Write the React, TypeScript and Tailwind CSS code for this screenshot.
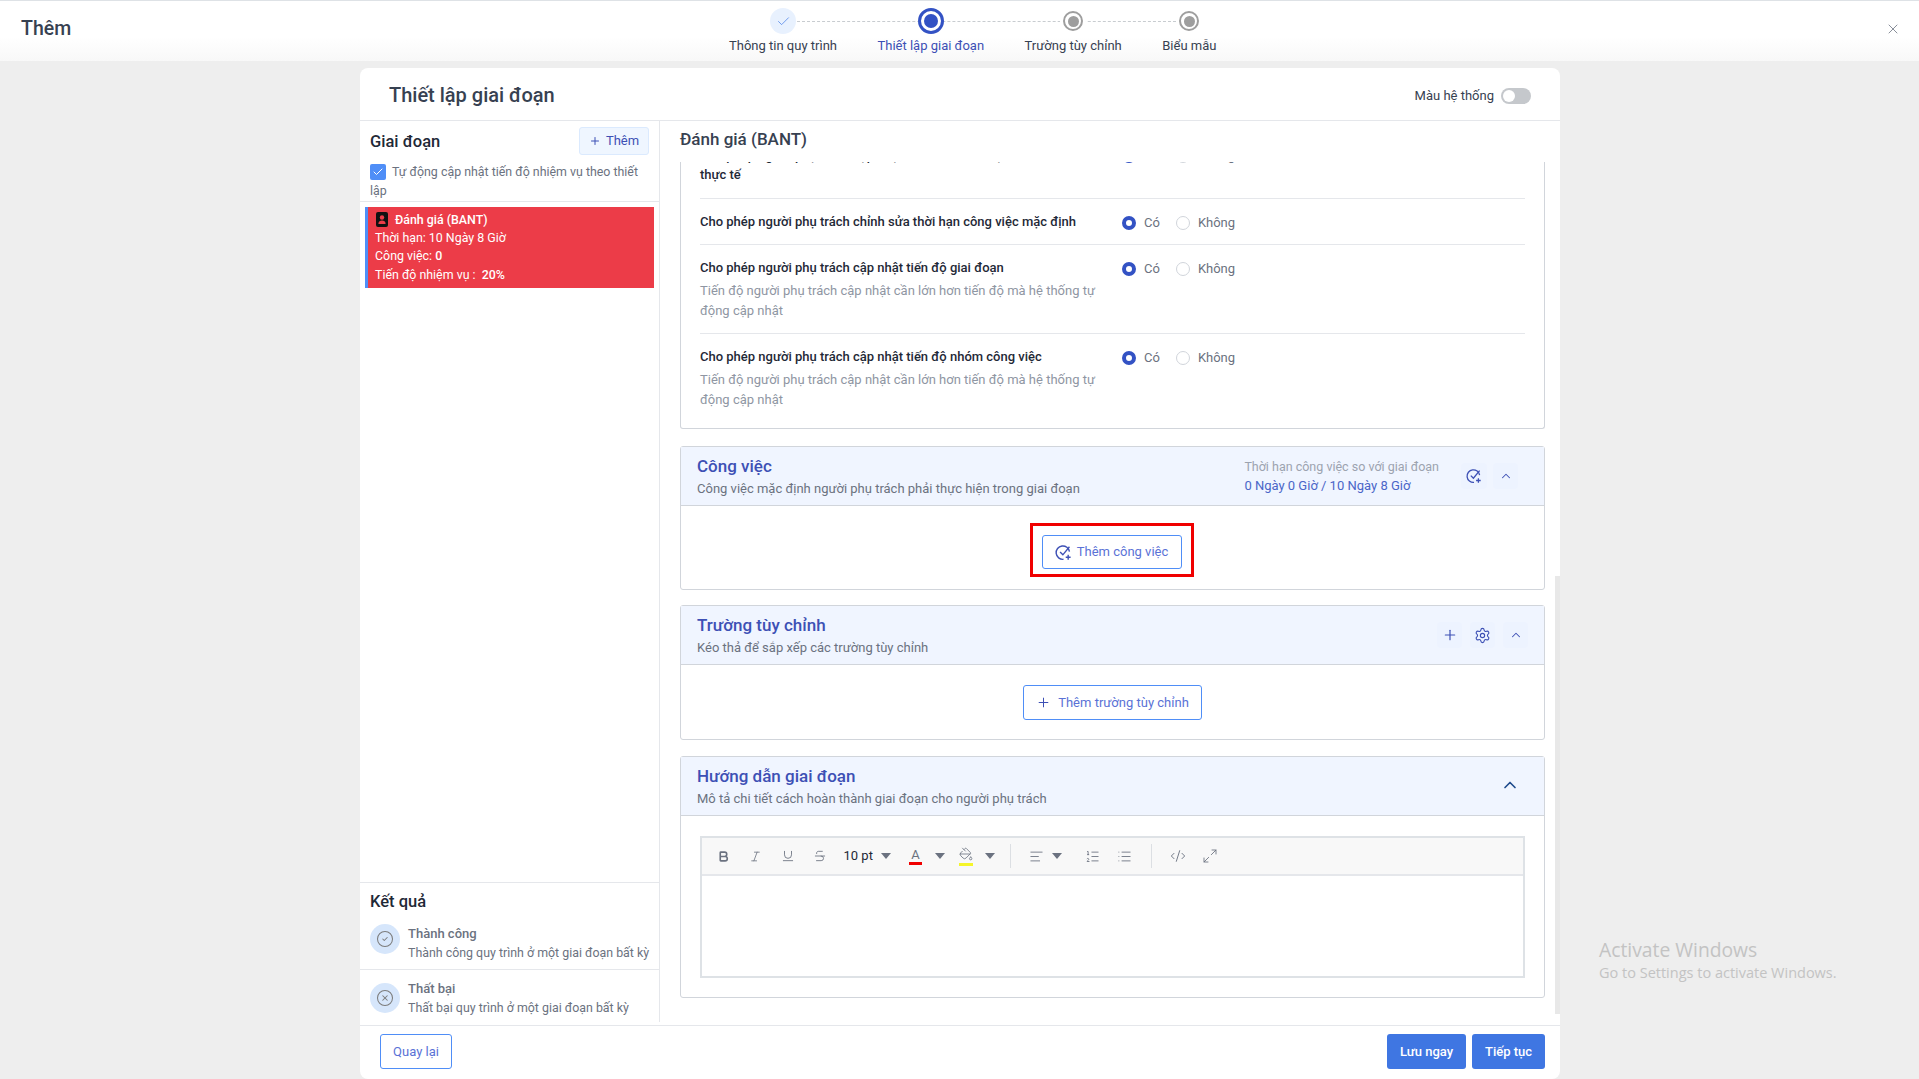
import type { ReactNode } from 'react';
import {
  AlignLeft,
  Bold,
  Check,
  ChevronUp,
  CircleCheck,
  CircleX,
  CodeXml,
  Italic,
  List,
  ListOrdered,
  Maximize2,
  PaintBucket,
  Plus,
  Settings,
  Strikethrough,
  Underline,
  X,
} from 'lucide-react';

function CheckPlusIcon({ size = 16 }: { size?: number }) {
  return (
    <svg width={size} height={size} viewBox="0 0 16 16" fill="none" stroke="currentColor" strokeWidth="1.3">
      <path d="M13.6 7.2A6.3 6.3 0 1 0 8 14.4" />
      <path d="M4.8 7.6 7.4 10.2 13.6 2.6" />
      <path d="M12.4 10.2v4.6M10.1 12.5h4.6" />
    </svg>
  );
}

function Caret() {
  return (
    <svg width="10" height="6" viewBox="0 0 10 6" className="fill-[#6b7280]">
      <path d="M0 0h10L5 6z" />
    </svg>
  );
}

function Radio({ checked, label }: { checked?: boolean; label: string }) {
  return (
    <div className="flex items-center">
      {checked ? (
        <span className="h-[14px] w-[14px] rounded-full border-[4px] border-[#3352c4] bg-white" />
      ) : (
        <span className="h-[14px] w-[14px] rounded-full border border-[#d1d5db] bg-white" />
      )}
      <span className="ml-2 text-[13px] text-[#6b7280]">{label}</span>
    </div>
  );
}

function RadioPair() {
  return (
    <div className="flex h-[19px] shrink-0 items-center gap-[16px]">
      <Radio checked label="Có" />
      <Radio label="Không" />
    </div>
  );
}

function SettingRow({ title, desc }: { title: string; desc?: string }) {
  return (
    <div className="flex border-b border-[#e5e7eb] pt-[14px] pb-[12px] last:border-b-0">
      <div className="w-[422px]">
        <p className="-mt-px mb-px text-[13px] leading-[19px] font-medium text-[#1f2937]">{title}</p>
        {desc && <p className="mt-[4px] w-[400px] text-[13px] leading-[20px] text-[#8f96a3]">{desc}</p>}
      </div>
      <RadioPair />
    </div>
  );
}

function Section({
  title,
  subtitle,
  right,
  children,
  className,
}: {
  title: string;
  subtitle: string;
  right?: ReactNode;
  children: ReactNode;
  className?: string;
}) {
  return (
    <section className={`rounded-[3px] border border-[#d1d5db] ${className ?? ''}`}>
      <div className="flex h-[59px] items-center justify-between border-b border-[#d1d5db] bg-[#f0f5ff] pl-4">
        <div>
          <h3 className="text-[17px] leading-[22px] font-medium text-[#3d50b5]">{title}</h3>
          <p className="mt-[3px] text-[13px] leading-[18px] text-[#6b7280]">{subtitle}</p>
        </div>
        {right}
      </div>
      {children}
    </section>
  );
}

function IconCell({ children, className }: { children: ReactNode; className?: string }) {
  return (
    <span className={`flex h-[26px] items-center justify-center rounded-[4px] bg-[#edf3ff] text-[#3d50b5] ${className ?? ''}`}>
      {children}
    </span>
  );
}

function Tool({ children, className }: { children: ReactNode; className?: string }) {
  return <span className={`flex h-6 w-8 items-center justify-center text-[#6b7280] ${className ?? ''}`}>{children}</span>;
}

function CaretCell({ className }: { className?: string }) {
  return (
    <span className={`flex h-6 w-3 items-center justify-center ${className ?? ''}`}>
      <Caret />
    </span>
  );
}

function Step({ label, state }: { label: string; state: 'done' | 'active' | 'todo' }) {
  return (
    <div className="flex flex-col items-center">
      <div className="relative z-10 flex h-[26px] w-[26px] items-center justify-center rounded-full bg-white">
        {state === 'done' && (
          <span className="flex h-[26px] w-[26px] items-center justify-center rounded-full bg-[#e8f1fe]">
            <Check size={15} strokeWidth={1.2} className="text-[#4a80e8]" />
          </span>
        )}
        {state === 'active' && (
          <span className="flex h-[26px] w-[26px] items-center justify-center rounded-full border-[3px] border-[#3352c4]">
            <span className="h-[14px] w-[14px] rounded-full bg-[#3352c4]" />
          </span>
        )}
        {state === 'todo' && (
          <span className="flex h-[20px] w-[20px] items-center justify-center rounded-full border-[2px] border-[#9e9e9e]">
            <span className="h-[11px] w-[11px] rounded-full bg-[#9e9e9e]" />
          </span>
        )}
      </div>
      <span className={`mt-[3px] text-[13px] leading-[18px] ${state === 'active' ? 'text-[#3d50b5]' : 'text-[#374151]'}`}>
        {label}
      </span>
    </div>
  );
}

export default function App() {
  return (
    <div className="relative flex h-[1079px] w-[1919px] flex-col overflow-hidden bg-[#eeeeee] font-['Roboto',sans-serif]">
      {/* Top bar */}
      <header className="flex h-[61px] shrink-0 items-start border-t border-[#dee2e6] bg-linear-to-b from-white from-60% to-[#f8f8f8] pl-5">
        <h1 className="mt-[16px] ml-px w-[708px] text-[19.5px] leading-[24px] font-medium text-[#374151]">Thêm</h1>
        <div className="relative mt-[7px] flex gap-[40.5px]">
          <div className="absolute top-[13px] right-[40px] left-[68px] border-t border-dashed border-[#c8ccd0]" />
          <Step label="Thông tin quy trình" state="done" />
          <Step label="Thiết lập giai đoạn" state="active" />
          <Step label="Trường tùy chỉnh" state="todo" />
          <Step label="Biểu mẫu" state="todo" />
        </div>
        <button type="button" aria-label="Đóng" className="mt-[20px] mr-[18px] ml-auto text-[#6b7280]">
          <X size={16} strokeWidth={1.2} />
        </button>
      </header>

      {/* Card */}
      <div className="mt-[7px] ml-[360px] flex min-h-0 w-[1200px] flex-1 flex-col overflow-hidden rounded-[8px] bg-white">
        <div className="flex h-[53px] shrink-0 items-center justify-between border-b border-[#e5e7eb] px-[29px]">
          <h2 className="pt-[2px] text-xl font-medium text-[#374151]">Thiết lập giai đoạn</h2>
          <div className="flex items-center gap-[7px] pt-[4px]">
            <span className="text-[13px] text-[#374151]">Màu hệ thống</span>
            <span className="flex h-4 w-[30px] items-center rounded-full bg-[#c5c8cc] pl-[2px]">
              <span className="h-3 w-3 rounded-full bg-white" />
            </span>
          </div>
        </div>

        <div className="flex min-h-0 flex-1 pb-[3px]">
          {/* Left column */}
          <aside className="flex w-[300px] shrink-0 flex-col border-r border-[#e5e7eb]">
            <div className="h-[81px] shrink-0 border-b border-[#e5e7eb] px-[10px] pt-[6px]">
              <div className="flex items-center justify-between">
                <h3 className="pt-px text-[16.5px] leading-6 font-medium text-[#1f2937]">Giai đoạn</h3>
                <button
                  type="button"
                  className="flex h-[28px] w-[70px] items-center justify-center gap-[5px] rounded-[3px] border border-[#dbeafe] bg-[#eff6ff] text-[13px] text-[#3d50b5]"
                >
                  <Plus size={12} />
                  Thêm
                </button>
              </div>
              <p className="mt-[7px] text-[12.4px] leading-[19px] text-[#6b7280]">
                <span className="mr-[6px] inline-flex h-4 w-4 items-center justify-center rounded-[2px] bg-[#4f8ef7] align-[-2px]">
                  <Check size={12} strokeWidth={2} className="text-white" />
                </span>
                Tự động cập nhật tiến độ nhiệm vụ theo thiết lập
              </p>
            </div>

            <div className="mx-[5px] mt-[5px] h-[81px] shrink-0 border-l-[3px] border-[#4f8ef7] bg-[#ec3c48] pt-[4px] pl-[7px] text-[12.4px] leading-[18.5px] text-white">
              <div className="flex h-[17.5px] items-center font-medium">
                <svg width="14" height="15" viewBox="0 0 14 15" className="mr-[6px]">
                  <rect x="1" width="12" height="15" rx="2" fill="#111" />
                  <circle cx="7" cy="5.5" r="2.2" fill="#ec3c48" />
                  <path d="M3.4 12c0-2.4 1.7-3.4 3.6-3.4s3.6 1 3.6 3.4z" fill="#ec3c48" />
                </svg>
                Đánh giá (BANT)
              </div>
              <div>Thời hạn: 10 Ngày 8 Giờ</div>
              <div>
                Công việc: <span className="font-medium">0</span>
              </div>
              <div>
                Tiến độ nhiệm vụ :&nbsp; <span className="font-medium">20%</span>
              </div>
            </div>

            <div className="mt-auto shrink-0 border-t border-[#e5e7eb]">
              <h3 className="px-[10px] pt-[7px] text-[16.5px] leading-6 font-medium text-[#1f2937]">Kết quả</h3>
              <div className="mt-[10px] flex items-start gap-2 border-b border-[#e5e7eb] px-[10px] pb-[7px]">
                <span className="flex h-[30px] w-[30px] shrink-0 items-center justify-center rounded-full bg-[#d6e6fb] text-[#7c7c7c]">
                  <CircleCheck size={18} strokeWidth={1.4} />
                </span>
                <div className="text-[12.4px] leading-[19px] whitespace-nowrap">
                  <p className="text-[13px] font-medium text-[#6b7280]">Thành công</p>
                  <p className="text-[#6b7280]">Thành công quy trình ở một giai đoạn bất kỳ</p>
                </div>
              </div>
              <div className="flex items-center gap-2 px-[10px] pt-[9px] pb-[5px]">
                <span className="flex h-[30px] w-[30px] shrink-0 items-center justify-center rounded-full bg-[#d6e6fb] text-[#7c7c7c]">
                  <CircleX size={18} strokeWidth={1.4} />
                </span>
                <div className="text-[12.4px] leading-[19px] whitespace-nowrap">
                  <p className="text-[13px] font-medium text-[#6b7280]">Thất bại</p>
                  <p className="text-[#6b7280]">Thất bại quy trình ở một giai đoạn bất kỳ</p>
                </div>
              </div>
            </div>
          </aside>

          {/* Right column */}
          <main className="relative flex min-w-0 flex-1 flex-col">
            <h3 className="h-[41px] shrink-0 pt-[7px] pl-5 text-[17px] leading-[22px] font-medium text-[#374151]">Đánh giá (BANT)</h3>
            <div className="min-h-0 flex-1 overflow-hidden pr-[15px] pl-5">
              <div className="-mt-[16px]">
                <div className="rounded-b-[3px] border border-t-0 border-[#d1d5db] px-[19px] pb-[6px]">
                  <div className="flex border-b border-[#e5e7eb] pb-[14px]">
                    <p className="w-[422px] text-[13px] leading-[19px] font-medium whitespace-nowrap text-[#1f2937]">
                      Cho phép người phụ trách cập nhật tiến độ nhiệm vụ theo tiến độ
                      <br />
                      thực tế
                    </p>
                    <RadioPair />
                  </div>
                  <SettingRow title="Cho phép người phụ trách chỉnh sửa thời hạn công việc mặc định" />
                  <SettingRow
                    title="Cho phép người phụ trách cập nhật tiến độ giai đoạn"
                    desc="Tiến độ người phụ trách cập nhật cần lớn hơn tiến độ mà hệ thống tự động cập nhật"
                  />
                  <SettingRow
                    title="Cho phép người phụ trách cập nhật tiến độ nhóm công việc"
                    desc="Tiến độ người phụ trách cập nhật cần lớn hơn tiến độ mà hệ thống tự động cập nhật"
                  />
                </div>

                <Section
                  className="mt-[17px]"
                  title="Công việc"
                  subtitle="Công việc mặc định người phụ trách phải thực hiện trong giai đoạn"
                  right={
                    <div className="flex items-center pr-[26px]">
                      <div className="mr-[22px] leading-[19px]">
                        <p className="text-[12.5px] text-[#9ca3af]">Thời hạn công việc so với giai đoạn</p>
                        <p className="text-[13px] text-[#4a66c8]">0 Ngày 0 Giờ / 10 Ngày 8 Giờ</p>
                      </div>
                      <IconCell className="w-[26px]">
                        <CheckPlusIcon size={16} />
                      </IconCell>
                      <IconCell className="ml-[6px] w-[25px]">
                        <ChevronUp size={14} strokeWidth={1.8} />
                      </IconCell>
                    </div>
                  }
                >
                  <div className="flex h-[83px] items-start justify-center pt-[17px] pr-[2px]">
                    {/* highlighted step on the source screenshot */}
                    <div className="border-[3px] border-[#f00000] px-[9px] pt-[9px] pb-[5px]">
                      <button
                        type="button"
                        className="flex h-[34px] w-[140px] items-center justify-center gap-[5px] rounded-[3px] border border-[#4f8ef7] text-[13px] text-[#5a72d6]"
                      >
                        <span className="text-[#3d50b5]">
                          <CheckPlusIcon size={17} />
                        </span>
                        Thêm công việc
                      </button>
                    </div>
                  </div>
                </Section>

                <Section
                  className="mt-[15px]"
                  title="Trường tùy chỉnh"
                  subtitle="Kéo thả để sắp xếp các trường tùy chỉnh"
                  right={
                    <div className="flex items-center gap-[8px] pr-[16px]">
                      <IconCell className="w-[25px]">
                        <Plus size={16} strokeWidth={1.8} />
                      </IconCell>
                      <IconCell className="w-[25px]">
                        <Settings size={17} strokeWidth={1.6} />
                      </IconCell>
                      <IconCell className="w-[25px]">
                        <ChevronUp size={14} strokeWidth={1.8} />
                      </IconCell>
                    </div>
                  }
                >
                  <div className="flex h-[74px] items-start justify-center pt-[20px]">
                    <button
                      type="button"
                      className="flex h-[35px] w-[179px] items-center justify-center gap-[7px] rounded-[3px] border border-[#4f8ef7] text-[13px] text-[#5a72d6]"
                    >
                      <Plus size={15} strokeWidth={1.6} className="text-[#3d50b5]" />
                      Thêm trường tùy chỉnh
                    </button>
                  </div>
                </Section>

                <Section
                  className="mt-[16px]"
                  title="Hướng dẫn giai đoạn"
                  subtitle="Mô tả chi tiết cách hoàn thành giai đoạn cho người phụ trách"
                  right={<ChevronUp size={20} strokeWidth={2} className="mr-[24px] mb-[3px] text-[#1e4a8c]" />}
                >
                  <div className="h-[181px] px-[19px] pt-5">
                    <div className="h-[142px] border-2 border-[#dee2e6]">
                      <div className="flex h-[38px] items-center border-b-2 border-[#e5e7eb] bg-[#f8f8f8] pl-[5.5px]">
                        <Tool>
                          <Bold size={13} strokeWidth={3} />
                        </Tool>
                        <Tool>
                          <Italic size={13} strokeWidth={1.5} />
                        </Tool>
                        <Tool>
                          <Underline size={14} strokeWidth={1.5} />
                        </Tool>
                        <Tool>
                          <Strikethrough size={14} strokeWidth={1.5} />
                        </Tool>
                        <span className="ml-2 w-9 text-[13px] text-[#1f2937]">10 pt</span>
                        <CaretCell />
                        <Tool className="ml-2 flex-col">
                          <span className="text-[13px] leading-[15px]">A</span>
                          <span className="h-[3px] w-[13px] bg-[#f00000]" />
                        </Tool>
                        <CaretCell className="ml-[2px]" />
                        <Tool className="ml-1 flex-col">
                          <PaintBucket size={14} strokeWidth={1.4} />
                          <span className="mt-[2px] h-[3px] w-[14px] bg-[#f5f52a]" />
                        </Tool>
                        <CaretCell className="ml-[2px]" />
                        <span className="ml-[14px] h-6 w-px bg-[#dcdfe3]" />
                        <Tool className="ml-[13px] w-[26px]">
                          <AlignLeft size={15} strokeWidth={1.4} />
                        </Tool>
                        <CaretCell className="ml-px" />
                        <Tool className="ml-[14px]">
                          <ListOrdered size={15} strokeWidth={1.4} />
                        </Tool>
                        <Tool>
                          <List size={15} strokeWidth={1.4} />
                        </Tool>
                        <span className="ml-[10px] h-6 w-px bg-[#dcdfe3]" />
                        <Tool className="ml-[10px]">
                          <CodeXml size={16} strokeWidth={1.4} />
                        </Tool>
                        <Tool>
                          <Maximize2 size={16} strokeWidth={1.3} />
                        </Tool>
                      </div>
                    </div>
                  </div>
                </Section>
              </div>
            </div>
            <div className="absolute top-[455px] right-0 h-[438px] w-[5px] bg-[#e8e8e8]" />
          </main>
        </div>

        {/* Footer */}
        <div className="flex h-[54px] shrink-0 items-start justify-between border-t border-[#e5e7eb] pt-[8px] pr-[15px] pl-5">
          <button type="button" className="h-[35px] w-[72px] rounded-[3px] border border-[#4f8ef7] text-[13px] text-[#5a72d6]">
            Quay lại
          </button>
          <div className="flex gap-[6px]">
            <button type="button" className="h-[35px] w-[79px] rounded-[3px] bg-[#3f76e2] text-[13px] font-medium text-white">
              Lưu ngay
            </button>
            <button type="button" className="h-[35px] w-[73px] rounded-[3px] bg-[#3f76e2] text-[13px] font-medium text-white">
              Tiếp tục
            </button>
          </div>
        </div>
      </div>

      {/* Windows watermark */}
      <div className="absolute top-[936px] left-[1599px] font-['Open_Sans',sans-serif] text-[#c3c3c3]">
        <p className="text-[19.3px] leading-[27px]">Activate Windows</p>
        <p className="text-[14.5px] leading-[20px]">Go to Settings to activate Windows.</p>
      </div>
    </div>
  );
}
